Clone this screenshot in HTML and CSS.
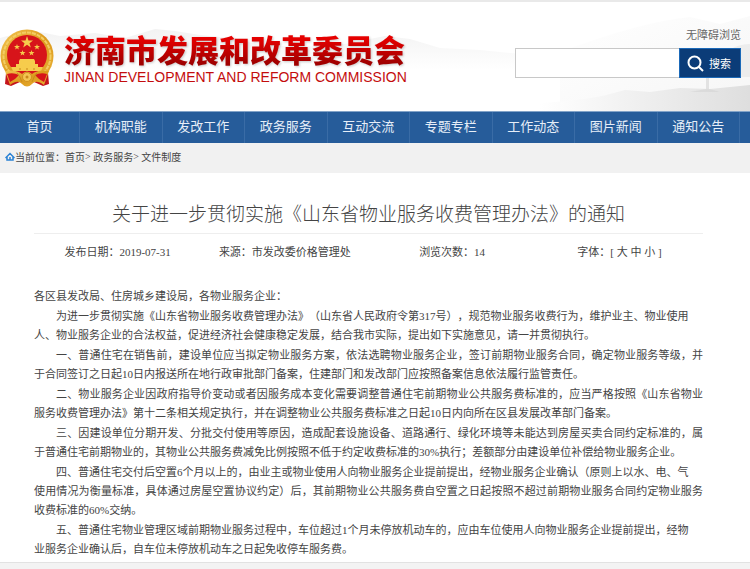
FILE: index.html
```html
<!DOCTYPE html>
<html lang="zh-CN">
<head>
    <meta charset="UTF-8">
    <meta name="viewport" content="width=device-width, initial-scale=1.0">
    <title>济南市发展和改革委员会</title>
    <link rel="stylesheet" href="styles.css">
</head>
<body>

<header class="header">
    <!-- 水墨山背景 -->
    <svg class="hills" viewBox="0 0 750 109" preserveAspectRatio="none" aria-hidden="true">
        <defs>
            <linearGradient id="fade" x1="0" y1="0" x2="0" y2="1">
                <stop offset="0" stop-color="#ededed"/>
                <stop offset="1" stop-color="#fff"/>
            </linearGradient>
            <linearGradient id="mist" x1="0" y1="0" x2="1" y2="0">
                <stop offset="0" stop-color="#fff"/>
                <stop offset="1" stop-color="#dedede"/>
            </linearGradient>
            <linearGradient id="peak" x1="0" y1="0" x2="1" y2="1">
                <stop offset="0" stop-color="#fff"/>
                <stop offset="1" stop-color="#ececec"/>
            </linearGradient>
        </defs>
        <path fill="url(#fade)" opacity=".7" d="M0 36 L30 28 L60 34 L95 31 L125 36 L155 27 L175 29 L200 33 L230 36 L260 43 L300 45 L345 42 L385 34 L410 37 L440 46 L480 48 L520 52 L540 68 H0 Z"/>
        <path fill="url(#peak)" d="M560 50 Q640 20 690 15 L720 22 L750 14 V109 H560 Z" opacity=".5"/>
        <path fill="#e4e4e4" d="M725 50 Q738 42 750 42 V75 H720 Z" opacity=".6"/>
        <path fill="url(#mist)" d="M540 101 Q590 98 610 92 L625 88 L650 90 L680 86 L710 87 L750 83 V109 H540 Z"/>
        <path fill="#d4d4d4" opacity=".6" d="M706 76 V87 L690 90 H720 L709 87 V76 Z"/>
    </svg>
    <div class="brand">
        <svg class="emblem" viewBox="0 0 54 60" role="img" aria-label="国徽">
            <defs>
                <linearGradient id="gold" x1="0" y1="0" x2="1" y2="1">
                    <stop offset="0" stop-color="#f4c552"/>
                    <stop offset=".5" stop-color="#dc9a1c"/>
                    <stop offset="1" stop-color="#e9b238"/>
                </linearGradient>
            </defs>
            <path fill="#c5141c" d="M6 44 L5 55 L11 57 L20 53 L27 57 L34 53 L43 57 L49 55 L48 44 Z"/>
            <ellipse cx="27" cy="27" rx="26.500" ry="26.500" fill="url(#gold)"/>
            <circle cx="27" cy="27" r="23.500" fill="none" stroke="#f3cd63" stroke-width="2" stroke-dasharray="4 1"/>
            <circle cx="27" cy="26" r="20" fill="#d7141a"/>
            <g fill="#f6cc4c">
                <polygon points="27,7 28.500,11.500 33,11.500 29.500,14.200 30.800,18.500 27,15.800 23.200,18.500 24.500,14.200 21,11.500 25.500,11.500"/>
                <polygon id="star" points="17,15 17.700,17 20,17 18.200,18.400 18.900,20.500 17,19.200 15.100,20.500 15.800,18.400 14,17 16.300,17"/>
                <use href="#star" x="20"/>
                <use href="#star" x="5.500" y="6"/>
                <use href="#star" x="14.500" y="6"/>
                <path d="M20 30 h14 l1 2 h-16 z M19 32 h16 v3 h-16 z M16 35 h22 v3 h-22 z M11 38 h32 l-2 4 h-28 z"/>
            </g>
            <path fill="url(#gold)" d="M5 42 Q16 40 22 45 Q27 40 32 45 Q38 40 49 42 L44 56 Q36 50 32 55 Q27 60 22 55 Q18 50 10 56 Z"/>
            <path fill="#d7141a" d="M7 45 Q13 43 19 46 L15 50 L10 53 Z M47 45 Q41 43 35 46 L39 50 L44 53 Z"/>
            <circle cx="27" cy="48" r="4.500" fill="#f4c552" stroke="#d09020"/>
            <circle cx="27" cy="48" r="1.500" fill="#c8891c"/>
            <path fill="none" stroke="#c8891c" d="M17 44 Q20 47 22 53 M37 44 Q34 47 32 53 M20 39 V41 M27 39 V41 M34 39 V41"/>
        </svg>
        <div class="brand-text">
            <h1>济南市发展和改革委员会</h1>
            <p>JINAN DEVELOPMENT AND REFORM COMMISSION</p>
        </div>
    </div>
    <div class="tools">
        <a href="#" class="accessible">无障碍浏览</a>
        <form class="search">
            <input type="text" aria-label="搜索内容">
            <button type="button">
                <svg viewBox="0 0 17 17" aria-hidden="true"><circle cx="7.500" cy="7.500" r="6" /><path d="M12 12 L16 16"/></svg>
                搜索
            </button>
        </form>
    </div>
</header>

<nav class="nav">
    <a href="#">首页</a>
    <a href="#">机构职能</a>
    <a href="#">发改工作</a>
    <a href="#">政务服务</a>
    <a href="#">互动交流</a>
    <a href="#">专题专栏</a>
    <a href="#">工作动态</a>
    <a href="#">图片新闻</a>
    <a href="#">通知公告</a>
</nav>

<div class="crumbs">
    <svg viewBox="0 0 10 9" aria-hidden="true"><path d="M0.500 6 L5 1.500 L9.500 6 M2 5 V8 H8 V5"/><path d="M5 5 V8"/></svg>
    <span>当前位置：</span>
    <a href="#">首页</a>&gt;&nbsp;<a href="#">政务服务</a>&gt;&nbsp;<a href="#">文件制度</a>
</div>

<main class="article">
    <h2>关于进一步贯彻实施《山东省物业服务收费管理办法》的通知</h2>
    <div class="meta">
        <span>发布日期：2019-07-31</span>
        <span>来源：市发改委价格管理处</span>
        <span>浏览次数：14</span>
        <span>字体：[ <a href="#">大</a> <a href="#">中</a> <a href="#">小</a> ]</span>
    </div>
    <div class="content">
        <p class="to">各区县发改局、住房城乡建设局，各物业服务企业：</p>
        <p>为进一步贯彻实施《山东省物业服务收费管理办法》（山东省人民政府令第317号），规范物业服务收费行为，维护业主、物业使用<br>人、物业服务企业的合法权益，促进经济社会健康稳定发展，结合我市实际，提出如下实施意见，请一并贯彻执行。</p>
        <p>一、普通住宅在销售前，建设单位应当拟定物业服务方案，依法选聘物业服务企业，签订前期物业服务合同，确定物业服务等级，并于合同签订之日起10日内报送所在地行政审批部门备案，住建部门和发改部门应按照备案信息依法履行监管责任。</p>
        <p>二、物业服务企业因政府指导价变动或者因服务成本变化需要调整普通住宅前期物业公共服务费标准的，应当严格按照《山东省物业服务收费管理办法》第十二条相关规定执行，并在调整物业公共服务费标准之日起10日内向所在区县发展改革部门备案。</p>
        <p>三、因建设单位分期开发、分批交付使用等原因，造成配套设施设备、道路通行、绿化环境等未能达到房屋买卖合同约定标准的，属于普通住宅前期物业的，其物业公共服务费减免比例按照不低于约定收费标准的30%执行；差额部分由建设单位补偿给物业服务企业。</p>
        <p>四、普通住宅交付后空置6个月以上的，由业主或物业使用人向物业服务企业提前提出，经物业服务企业确认（原则上以水、电、气<br>使用情况为衡量标准，具体通过房屋空置协议约定）后，其前期物业公共服务费自空置之日起按照不超过前期物业服务合同约定物业服务收费标准的60%交纳。</p>
        <p>五、普通住宅物业管理区域前期物业服务过程中，车位超过1个月未停放机动车的，应由车位使用人向物业服务企业提前提出，经物<br>业服务企业确认后，自车位未停放机动车之日起免收停车服务费。</p>
        <p>六、物业服务企业接受业主委托提供物业服务以外的特约服务的，服务收费由双方协商约定，并在物业管理区域内显著位置公示。</p>
    </div>
</main>

<div class="bottom-bar"></div>

</body>
</html>
```

FILE: styles.css
```css
* {
    box-sizing: border-box;
}

body {
    margin: 0;
    height: 100vh;
    display: flex;
    flex-direction: column;
    overflow: hidden;
    font-family: "Liberation Serif", "Noto Sans CJK SC", sans-serif;
    font-size: 11px;
    color: #444;
    background: #fff;
    text-spacing-trim: space-all;
}

h1, h2, p {
    margin: 0;
    font-weight: normal;
}

a {
    color: inherit;
    text-decoration: none;
}

/* 页头 */
.header {
    position: relative;
    flex: none;
    display: flex;
    justify-content: space-between;
    height: 111px;
    padding: 0 9px 0 0;
    border-top: 2px solid #e9e9e9;
}

.hills {
    position: absolute;
    left: 0;
    top: 0;
    width: 100%;
    height: 100%;
}

.brand {
    position: relative;
    display: flex;
    gap: 10px;
    padding-top: 27px;
}

.emblem {
    width: 54px;
    height: 60px;
}

.brand-text h1 {
    margin: 2px 0;
    font-family: "Noto Sans CJK SC", sans-serif;
    font-size: 31px;
    font-weight: 900;
    line-height: 36px;
    color: transparent;
    background: linear-gradient(#e60000 20%, #a00000 90%);
    background-clip: text;
    filter: drop-shadow(1px 1px 1px rgba(0, 0, 0, 0.2));
}

.brand-text p {
    font-family: "Liberation Sans", Arial, sans-serif;
    font-size: 14px;
    line-height: 16px;
    white-space: nowrap;
    color: #c40d0d;
}

.tools {
    position: relative;
    display: flex;
    flex-direction: column;
    align-items: flex-end;
    padding-top: 25px;
}

.accessible {
    line-height: 16px;
    margin-bottom: 5px;
    color: #666;
}

.search {
    display: flex;
    height: 30px;
}

.search input {
    width: 164px;
    border: 1px solid #c8c8c8;
    border-right: 0;
    background: #fff;
}

.search button {
    display: flex;
    align-items: center;
    gap: 5px;
    width: 62px;
    padding: 0 7px;
    border: 1px solid #1b69b8;
    background: #0b3c78;
    color: #fff;
    font-family: inherit;
    font-size: 11px;
    white-space: nowrap;
}

.search svg {
    flex: none;
    width: 17px;
    height: 17px;
    fill: none;
    stroke: #fff;
    stroke-width: 2;
}

/* 导航 */
.nav {
    flex: none;
    display: grid;
    grid-template-columns: 80px repeat(8, 1fr) 10px;
    height: 32px;
    border-top: 1px solid #82a3c8;
    background: #265c9a;
}

.nav a {
    border-right: 1px solid #3a6ca6;
    font-size: 13px;
    line-height: 30px;
    text-align: center;
    color: #e6eef8;
}

/* 当前位置 */
.crumbs {
    flex: none;
    display: flex;
    align-items: center;
    height: 30px;
    padding: 0 5px 4px;
    font-size: 10px;
    background: #f1f1f1;
}

.crumbs svg {
    width: 10px;
    height: 9px;
    fill: none;
    stroke: #2b82d4;
    stroke-width: 1.5;
}

/* 正文 */
.article {
    flex: 1;
    min-height: 0;
    overflow: hidden;
    padding: 27px 47px 0 34px;
}

.article h2 {
    padding-bottom: 3px;
    border-bottom: 1px solid #eee;
    font-size: 19px;
    font-weight: 300;
    line-height: 30px;
    text-align: center;
}

.meta {
    display: grid;
    grid-template-columns: repeat(4, 1fr);
    padding-top: 8px;
    line-height: 20px;
    text-align: center;
}

.content {
    padding-top: 25px;
    line-height: 19px;
    text-align: justify;
}

.content p {
    margin-bottom: 1px;
    text-indent: 2em;
}

.content .to {
    text-indent: 0;
}

.bottom-bar {
    flex: none;
    height: 7px;
    border-top: 1px solid #e2e2e2;
    background: #f3f3f3;
}
```
